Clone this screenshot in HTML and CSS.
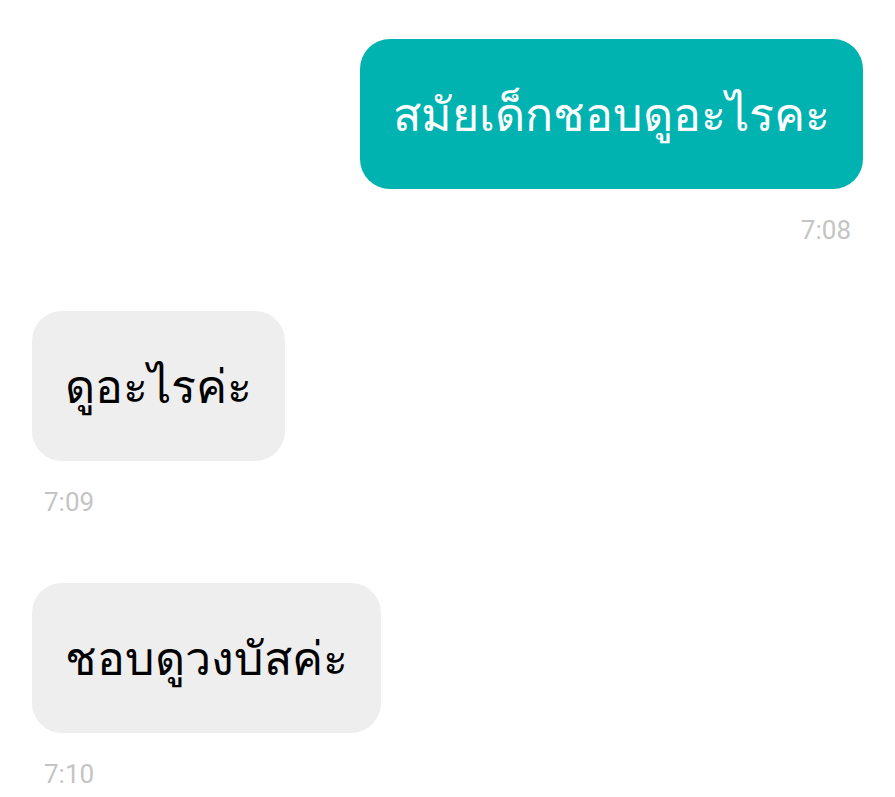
FILE: index.html
```html
<!DOCTYPE html>
<html lang="th">
<head>
    <meta charset="UTF-8">
    <title>Chat</title>
    <link rel="stylesheet" href="styles.css">
</head>
<body>
    <div class="chat">
        <div class="msg msg-out">
            <div class="bubble">สมัยเด็กชอบดูอะไรคะ</div>
            <div class="time">7:08</div>
        </div>
        <div class="msg msg-in">
            <div class="bubble">ดูอะไรค่ะ</div>
            <div class="time">7:09</div>
        </div>
        <div class="msg msg-in">
            <div class="bubble">ชอบดูวงบัสค่ะ</div>
            <div class="time">7:10</div>
        </div>
    </div>
</body>
</html>
```

FILE: styles.css
```css
body {
    margin: 0;
    background: #fff;
    font-family: "DejaVu Sans", "Noto Sans", sans-serif;
}
.chat {
    padding: 39px 32px 0 32px;
    display: flex;
    flex-direction: column;
    gap: 66px;
}
.msg {
    display: flex;
    flex-direction: column;
}
.msg-out {
    align-items: flex-end;
}
.msg-in {
    align-items: flex-start;
}
.bubble {
    height: 150px;
    box-sizing: border-box;
    padding: 0 33px;
    display: flex;
    align-items: center;
    font-size: 46.5px;
    border-radius: 30px;
}
.msg-out .bubble {
    background: #00b3b1;
    color: #fff;
}
.msg-in .bubble {
    background: #eeeeee;
    color: #000;
}
.time {
    margin-top: 26px;
    font-family: Roboto, "Liberation Sans", sans-serif;
    font-size: 26px;
    line-height: 30px;
    color: #c4c4c4;
    padding: 0 12px;
}
```
